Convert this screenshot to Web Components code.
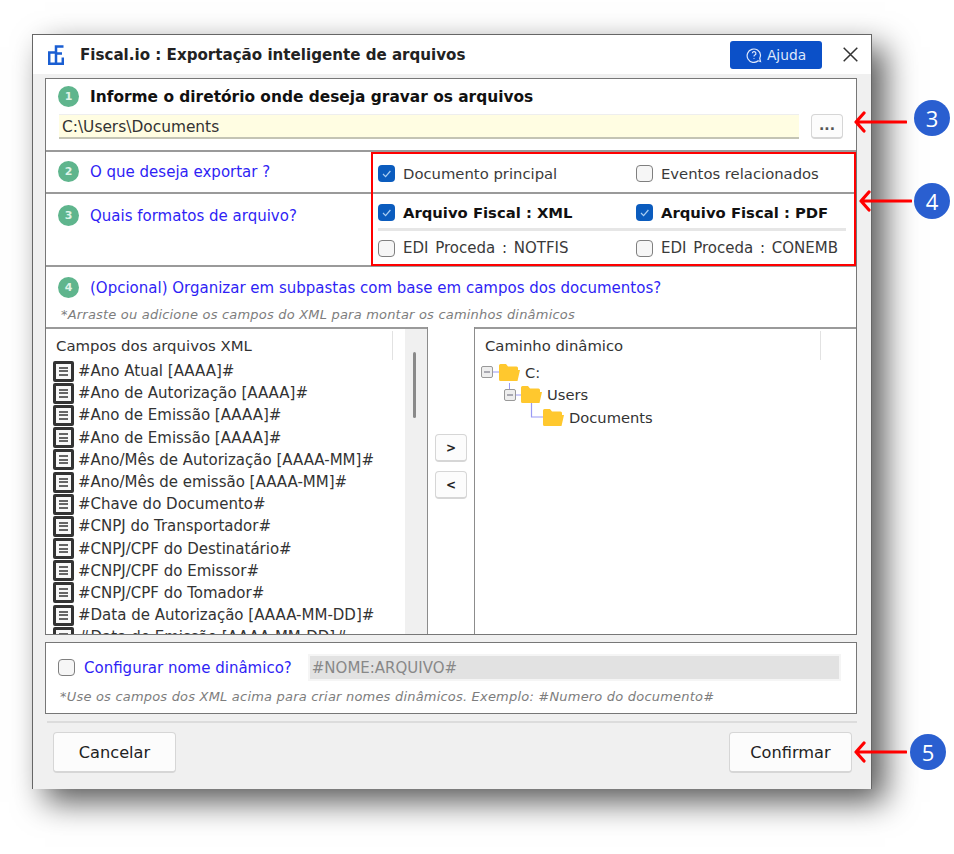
<!DOCTYPE html>
<html lang="pt-BR">
<head>
<meta charset="utf-8">
<title>Fiscal.io</title>
<style>
html, body { margin: 0; height: 854px; background: #fff; overflow: hidden; }
body { font: 15px "DejaVu Sans", Verdana, sans-serif; color: #222; padding: 34px 0 0 32px; box-sizing: border-box; position: relative; }
</style>
</head>
<body>
<export-dialog></export-dialog>
<red-frame></red-frame>
<call-out num="3" style="left:853px;top:100px" gap="7" drop="7"></call-out>
<call-out num="4" style="left:858px;top:183px" gap="2" drop="0"></call-out>
<call-out num="5" style="left:853px;top:734px" gap="3" drop="0"></call-out>

<script>
const CHECK = '<svg viewBox="0 0 17 17" width="17" height="17"><path d="M5 9l2.6 2.6L12.4 6" fill="none" stroke="#a9cdf2" stroke-width="1.2"/></svg>';

class StepBadge extends HTMLElement {
    constructor() {
        super();
        this.attachShadow({ mode: 'open' }).innerHTML = `<style>
            :host { display: inline-flex; width: 21px; height: 21px; border-radius: 50%; background: #5fb58d; color: #dff3e8;
                align-items: center; justify-content: center; font: bold 11px "DejaVu Sans", sans-serif; flex: none; }
        </style><slot></slot>`;
    }
}
customElements.define('step-badge', StepBadge);

class TickBox extends HTMLElement {
    constructor() {
        super();
        this.attachShadow({ mode: 'open' }).innerHTML = `<style>
            :host { display: flex; align-items: center; gap: 8px; color: #3a3a3a; font-size: 14.800px; white-space: nowrap; }
            :host([bold]) { font-weight: bold; color: #111; }
            :host([edi]) { font-size: 15px; word-spacing: 2px; }
            .box { width: 17px; height: 17px; box-sizing: border-box; border: 1.5px solid #7f7f7f; border-radius: 4px; background: #f6f6f6; flex: none; }
            .box.on { background: #0b5cbe; border: 0; }
            svg { display: block; }
        </style><span class="box"></span><slot></slot>`;
    }
    connectedCallback() {
        if (this.hasAttribute('checked')) {
            const box = this.shadowRoot.querySelector('.box');
            box.classList.add('on');
            box.innerHTML = CHECK;
        }
    }
}
customElements.define('tick-box', TickBox);

class PlainButton extends HTMLElement {
    constructor() {
        super();
        this.attachShadow({ mode: 'open' }).innerHTML = `<style>
            :host { display: flex; align-items: center; justify-content: center; box-sizing: border-box; background: #fcfcfc;
                border: 1px solid #d6d6d6; border-bottom-width: 2px; border-radius: 4px; color: #222; font-size: 14px; flex: none; }
        </style><slot></slot>`;
    }
}
customElements.define('plain-button', PlainButton);

class FieldList extends HTMLElement {
    constructor() {
        super();
        this.attachShadow({ mode: 'open' }).innerHTML = `<style>
            :host { display: flex; width: 381px; box-sizing: border-box; overflow: hidden; position: relative; }
            .main { flex: 1; min-width: 0; padding: 2px 0 0 7px; }
            .head { height: 29px; display: flex; align-items: center; justify-content: space-between; padding: 0 12px 0 3px; color: #333; font-size: 14.900px; }
            .head i { width: 1px; height: 29px; background: #e2e2e2; }
            .row { height: 22.2px; display: flex; align-items: center; gap: 4px; font-size: 15px; color: #333; white-space: nowrap; }
            .ico { width: 21px; height: 21px; box-sizing: border-box; border: 3px solid #333; border-radius: 2px; flex: none;
                display: flex; flex-direction: column; justify-content: center; gap: 1.500px; padding: 0 3px; background: #f8f8f8; }
            .ico b { display: block; height: 2px; background: #666; }
            .track { width: 22px; background: #f0f0f0; flex: none; position: relative; }
            .thumb { position: absolute; left: 8px; top: 23px; width: 3px; height: 66px; background: #8a8a8a; border-radius: 2px; }
        </style>
        <div class="main"><div class="head"><span>Campos dos arquivos XML</span><i></i></div><div class="rows"></div></div>
        <div class="track"><div class="thumb"></div></div>`;
    }
    set items(list) {
        this.shadowRoot.querySelector('.rows').innerHTML = list.map(t =>
            `<div class="row"><span class="ico"><b></b><b></b><b></b></span><span>${t}</span></div>`).join('');
    }
}
customElements.define('field-list', FieldList);

const FOLDER = '<svg width="21" height="17" viewBox="0 0 21 17"><path d="M0 1.5Q0 0 1.5 0H7l2 2.5h8.5Q19 2.500 19 4V6h2l-2.500 11H1.500Q0 17 0 15.500Z" fill="#ffc82e"/></svg>';

class PathTree extends HTMLElement {
    constructor() {
        super();
        this.attachShadow({ mode: 'open' }).innerHTML = `<style>
            :host { display: block; flex: 1; min-width: 0; box-sizing: border-box; padding: 2px 0 0 10px; font-size: 14.700px; color: #333; }
            .head { height: 29px; display: flex; align-items: center; justify-content: space-between; padding-right: 35px; font-size: 14.800px; }
            .head i { width: 1px; height: 29px; background: #e2e2e2; }
            .tree { margin: 1px 0 0 -4px; }
            .node { height: 22.500px; display: flex; align-items: center; }
            .node svg { display: block; flex: none; overflow: visible; }
            .node span { margin-left: 5px; }
            .n1 { padding-left: 23px; } .n2 { padding-left: 45px; }
        </style>
        <div class="head"><span>Caminho dinâmico</span><i></i></div>
        <div class="tree">
            <div class="node"><svg width="18" height="12"><rect x=".5" y=".5" width="11" height="11" rx="1.500" fill="#eee" stroke="#999"/><path d="M3 6h6" stroke="#667"/><path d="M12 6h6" stroke="#9a9af5"/></svg>${FOLDER}<span>C:</span></div>
            <div class="node n1"><svg width="17" height="12"><rect x=".5" y=".5" width="11" height="11" rx="1.500" fill="#eee" stroke="#999"/><path d="M3 6h6" stroke="#667"/><path d="M12 6h5M5.500 0v-6" stroke="#9a9af5"/></svg>${FOLDER}<span>Users</span></div>
            <div class="node n2"><svg width="17" height="12"><path d="M5.500 -8V6H17" fill="none" stroke="#9a9af5" stroke-width="1.200"/></svg>${FOLDER}<span>Documents</span></div>
        </div>`;
    }
}
customElements.define('path-tree', PathTree);

class ExportDialog extends HTMLElement {
    constructor() {
        super();
        this.attachShadow({ mode: 'open' }).innerHTML = `<style>
            :host { display: flex; flex-direction: column; width: 840px; height: 755px; box-sizing: border-box; background: #f0f0f0;
                border: 1px solid #666; border-width: 1px 1px 0 1px; box-shadow: 13px 13px 30px rgba(0,0,0,.65); }
            header { height: 39px; background: #fff; display: flex; align-items: center; padding: 0 13px 0 15px; flex: none; }
            header svg.logo { margin-right: 16px; }
            header h1 { margin: 0; flex: 1; font-size: 15.100px; font-weight: bold; color: #222; }
            .help { width: 92px; height: 28px; background: #0b50c8; border-radius: 3px; color: #dfe8fb; display: flex; align-items: center;
                justify-content: center; gap: 5px; font-size: 13.800px; margin-right: 21px; }
            .panel { margin: 4px 14px 0 12px; background: #fff; border: 1px solid #777; flex: none; }
            .sec { display: flex; border-bottom: 2px solid #9a9a9a; box-sizing: border-box; }
            .blue { color: #2f1ff5; font-size: 15px; }
            .r1 { height: 73px; flex-direction: column; padding: 7px 13px 0 12px; }
            .title { display: flex; align-items: center; gap: 11px; font-weight: bold; color: #111; font-size: 15.400px; }
            .inrow { display: flex; margin: 7px 0 0 1px; gap: 12px; }
            .path { flex: 1; height: 25px; box-sizing: border-box; background: #fffde2; border-bottom: 2px solid #c4c4b4; border-top: 1px solid #eee;
                color: #333; padding: 1px 0 0 3px; display: flex; align-items: center; font-size: 15.400px; }
            .dots { width: 32px; height: 25px; padding-bottom: 2px; font-weight: bold; color: #555; }
            .lab { width: 326px; box-sizing: border-box; padding-left: 12px; display: flex; gap: 11px; align-items: center; flex: none; height: 21px; }
            .r2 .lab { margin-top: 9px; }
            .r3 .lab { margin-top: 11px; }
            .r2 { height: 42px; }
            .r3 { height: 73px; }
            .opts { flex: 1; padding: 0 10px 0 6px; display: grid; grid-template-columns: 258px 1fr; }
            .r2 .opts { align-items: center; padding-top: 2px; }
            .r3 .opts { grid-template-rows: 37px 1fr; align-items: center; }
            .r3 .opts .top { border-bottom: 3px solid #e6e6e6; height: 37px; padding-top: 2px; box-sizing: border-box; }
            .r4 { height: 60px; flex-direction: column; padding: 10px 13px 0 12px; border-bottom: 0; }
            .r4 .title { font-weight: normal; }
            .note { font-size: 13px; letter-spacing: .2px; font-style: italic; color: #7d7d7d; white-space: nowrap; }
            .r4 .note { margin: 9px 0 0 3px; }
            .lists { height: 307px; display: flex; border-bottom: 0; }
            .lists field-list, .lists path-tree { border-top: 2px solid #9a9a9a; }
            .mid { width: 48px; flex: none; border: solid #8c8c8c; border-width: 0 1px; background: #fff; display: flex; flex-direction: column;
                align-items: center; gap: 9px; padding-top: 107px; box-sizing: border-box; }
            .mid plain-button { width: 32px; height: 28px; font-weight: bold; font-size: 12px; }
            .name { height: 72px; margin-top: 7px; padding: 11px 15px 0 12px; box-sizing: border-box; }
            .nrow { display: flex; align-items: center; }
            .nrow tick-box { margin-right: 9px; }
            .dyn { margin-left: 16px; flex: 1; height: 27px; box-sizing: border-box; background: #e2e2e2; border: 2px solid #f5f5f5; color: #888; font-size: 15px;
                display: flex; align-items: center; padding-left: 2px; }
            .name .note { margin: 8px 0 0 2px; }
            .rule { height: 2px; background: #dcdcdc; margin: 7px 14px 0 14px; flex: none; }
            footer { display: flex; justify-content: space-between; padding: 9px 19px 0 20px; }
            footer plain-button { height: 41px; font-size: 16.200px; }
        </style>
        <header>
            <svg class="logo" width="16" height="20" viewBox="0 0 16 20" fill="none" stroke="#1a5ed2" stroke-width="2.500">
                <path d="M15.500 1.500H8V18.800M8 8.500H14M8 7.500H1.200V18.800H14.800V12.500"/>
            </svg>
            <h1>Fiscal.io : Exportação inteligente de arquivos</h1>
            <div class="help">
                <svg width="16" height="16" viewBox="0 0 16 16" fill="none" stroke="#dfe8fb" stroke-width="1.200"><path d="M14.500 14.500l-2.300-.7A6.700 6.700 0 1 1 14.500 8a6.500 6.500 0 0 1-.8 3.200z"/><path d="M6.300 6.300a1.800 1.800 0 1 1 2.600 1.700c-.6.300-.9.700-.9 1.400M8 11v.8"/></svg>
                <span>Ajuda</span>
            </div>
            <svg width="15" height="15" viewBox="0 0 15 15" stroke="#333" stroke-width="1.500"><path d="M.7.700l13.600 13.600M14.300.700L.7 14.300"/></svg>
        </header>
        <div class="panel">
            <div class="sec r1">
                <div class="title"><step-badge>1</step-badge>Informe o diretório onde deseja gravar os arquivos</div>
                <div class="inrow"><div class="path">C:\\Users\\Documents</div><plain-button class="dots">...</plain-button></div>
            </div>
            <div class="sec r2">
                <div class="lab"><step-badge>2</step-badge><span class="blue">O que deseja exportar ?</span></div>
                <div class="opts"><tick-box checked>Documento principal</tick-box><tick-box>Eventos relacionados</tick-box></div>
            </div>
            <div class="sec r3">
                <div class="lab"><step-badge>3</step-badge><span class="blue">Quais formatos de arquivo?</span></div>
                <div class="opts">
                    <tick-box class="top" checked bold>Arquivo Fiscal : XML</tick-box><tick-box class="top" checked bold>Arquivo Fiscal : PDF</tick-box>
                    <tick-box edi>EDI Proceda : NOTFIS</tick-box><tick-box edi>EDI Proceda : CONEMB</tick-box>
                </div>
            </div>
            <div class="sec r4">
                <div class="title"><step-badge>4</step-badge><span class="blue">(Opcional) Organizar em subpastas com base em campos dos documentos?</span></div>
                <div class="note">*Arraste ou adicione os campos do XML para montar os caminhos dinâmicos</div>
            </div>
            <div class="sec lists">
                <field-list></field-list>
                <div class="mid"><plain-button>&gt;</plain-button><plain-button>&lt;</plain-button></div>
                <path-tree></path-tree>
            </div>
        </div>
        <div class="panel name">
            <div class="nrow"><tick-box></tick-box><span class="blue">Configurar nome dinâmico?</span><div class="dyn">#NOME:ARQUIVO#</div></div>
            <div class="note">*Use os campos dos XML acima para criar nomes dinâmicos. Exemplo: #Numero do documento#</div>
        </div>
        <div class="rule"></div>
        <footer>
            <plain-button style="width:123px">Cancelar</plain-button>
            <plain-button style="width:123px">Confirmar</plain-button>
        </footer>`;
    }
    connectedCallback() {
        this.shadowRoot.querySelector('field-list').items = [
            '#Ano Atual [AAAA]#', '#Ano de Autorização [AAAA]#', '#Ano de Emissão [AAAA]#', '#Ano de Emissão [AAAA]#',
            '#Ano/Mês de Autorização [AAAA-MM]#', '#Ano/Mês de emissão [AAAA-MM]#', '#Chave do Documento#',
            '#CNPJ do Transportador#', '#CNPJ/CPF do Destinatário#', '#CNPJ/CPF do Emissor#', '#CNPJ/CPF do Tomador#',
            '#Data de Autorização [AAAA-MM-DD]#', '#Data de Emissão [AAAA-MM-DD]#'
        ];
    }
}
customElements.define('export-dialog', ExportDialog);

// the annotations lie over the screenshot
class RedFrame extends HTMLElement {
    constructor() {
        super();
        this.attachShadow({ mode: 'open' }).innerHTML = `<style>
            :host { position: absolute; left: 371px; top: 152px; width: 485px; height: 114px; box-sizing: border-box; border: 2px solid #f00; }
        </style>`;
    }
}
customElements.define('red-frame', RedFrame);

class CallOut extends HTMLElement {
    constructor() {
        super();
        this.attachShadow({ mode: 'open' }).innerHTML = `<style>
            :host { position: absolute; display: flex; align-items: center; height: 36px; }
            svg { display: block; }
            .num { width: 36px; height: 36px; border-radius: 50%; background: #2a5fd0; color: #fff; display: flex; align-items: center;
                justify-content: center; font: 22px "Open Sans", sans-serif; }
        </style>
        <svg width="54" height="24" viewBox="0 0 54 24" fill="none" stroke="#f00" stroke-width="3.200" stroke-linecap="round" stroke-linejoin="round"><path d="M53 12H3M11 3l-8 9 8 9"/></svg>
        <div class="num"></div>`;
    }
    connectedCallback() {
        this.shadowRoot.querySelector('.num').textContent = this.getAttribute('num');
        const arrow = this.shadowRoot.querySelector('svg');
        arrow.style.marginRight = this.getAttribute('gap') + 'px';
        arrow.style.marginTop = this.getAttribute('drop') + 'px';
    }
}
customElements.define('call-out', CallOut);
</script>
</body>
</html>
